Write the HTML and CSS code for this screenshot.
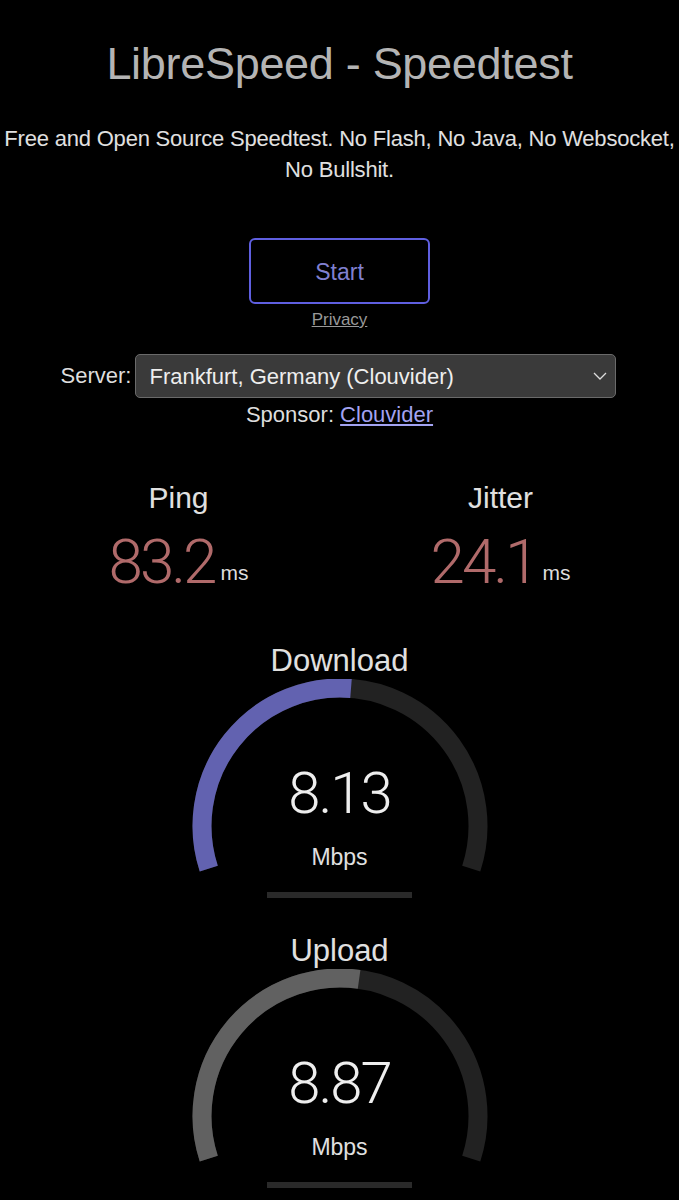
FILE: index.html
```html
<!DOCTYPE html>
<html>
    <head lang="en">
        <meta charset="UTF-8">
        <title>LibreSpeed - Speedtest</title>
        <link rel="stylesheet" href="styles.css">
    </head>
    <body>
        <h1 id="title">LibreSpeed - Speedtest</h1>
        <p id="intro">Free and Open Source Speedtest. No Flash, No Java, No Websocket, No Bullshit.</p>
        <div id="startBtn">Start</div>
        <a id="privacy" href="#">Privacy</a>
        <div id="server">
            <label for="serverList">Server:</label>
            <span class="select-wrap">
                <select id="serverList">
                    <option>Frankfurt, Germany (Clouvider)</option>
                </select>
                <svg class="chevron" width="14" height="8" viewBox="0 0 14 8"><path d="M1 1 L7 7 L13 1" fill="none" stroke="#ddd" stroke-width="1.3"/></svg>
            </span>
        </div>
        <div id="sponsor">Sponsor: <a href="#">Clouvider</a></div>

        <div id="ping-row">
            <div class="small-meter">
                <div class="label">Ping</div>
                <div class="value"><span class="num">83.2</span><span class="unit">ms</span></div>
            </div>
            <div class="small-meter">
                <div class="label">Jitter</div>
                <div class="value"><span class="num">24.1</span><span class="unit">ms</span></div>
            </div>
        </div>

        <div class="meter-block" id="dl">
            <div class="meter-title">Download</div>
            <div class="meter">
                <svg width="300" height="195" viewBox="0 0 300 195">
                    <path class="track" d="M18.76 189.64 A138 138 0 1 1 281.24 189.64"/>
                    <path class="fill" stroke="#6262b0" d="M18.76 189.64 A138 138 0 0 1 161.0 9.44"/>
                </svg>
                <div class="meter-text">
                    <div class="meter-num">8.13</div>
                    <div class="meter-unit">Mbps</div>
                </div>
            </div>
            <div class="progress"></div>
        </div>

        <div class="meter-block" id="ul">
            <div class="meter-title">Upload</div>
            <div class="meter">
                <svg width="300" height="195" viewBox="0 0 300 195">
                    <path class="track" d="M18.76 189.64 A138 138 0 1 1 281.24 189.64"/>
                    <path class="fill" stroke="#616161" d="M18.76 189.64 A138 138 0 0 1 169.1 10.33"/>
                </svg>
                <div class="meter-text">
                    <div class="meter-num">8.87</div>
                    <div class="meter-unit">Mbps</div>
                </div>
            </div>
            <div class="progress"></div>
        </div>
    </body>
</html>
```

FILE: styles.css
```css
*{
    margin:0;
    padding:0;
    box-sizing:border-box;
}
body{
    background-color:#000;
    color:#ddd;
    font-family:"Liberation Sans", Arial, sans-serif;
    text-align:center;
    overflow:hidden;
}
a{
    color:#999;
}
#title{
    font-size:45px;
    font-weight:normal;
    line-height:54px;
    color:#b4b4b4;
    padding-top:37px;
    letter-spacing:-0.3px;
}
#intro{
    margin-top:32px;
    font-size:22px;
    line-height:31px;
    color:#e0e0e0;
    letter-spacing:-0.2px;
}
#startBtn{
    width:181px;
    height:66px;
    margin:53px auto 0;
    border:2.5px solid #5f5fe0;
    border-radius:6px;
    color:#8080d0;
    font-size:23px;
    line-height:64px;
    cursor:pointer;
}
#privacy{
    display:block;
    width:60px;
    margin:5px auto 0;
    font-size:17px;
    line-height:21px;
    color:#999;
}
#server{
    display:flex;
    justify-content:center;
    align-items:center;
    gap:4px;
    margin-top:24px;
    font-size:22px;
    color:#ddd;
    padding-right:2px;
}
.select-wrap{
    position:relative;
    display:block;
}
#serverList{
    display:block;
    width:481px;
    height:44px;
    appearance:none;
    -webkit-appearance:none;
    background-color:#3a3a3a;
    border:1px solid #6a6a6a;
    border-radius:5px;
    color:#eee;
    font-family:"Liberation Sans", Arial, sans-serif;
    font-size:22px;
    padding-left:13px;
}
.chevron{
    position:absolute;
    right:9px;
    top:18px;
}
#sponsor{
    margin-top:5px;
    font-size:22px;
    line-height:24px;
    color:#ddd;
}
#sponsor a{
    color:#a3a3f2;
}
#ping-row{
    display:flex;
    width:644px;
    margin:54px auto 0;
}
.small-meter{
    flex:1;
}
.small-meter .label{
    font-size:30px;
    line-height:34px;
    color:#e0e0e0;
}
.small-meter .value{
    margin-top:16px;
    line-height:62px;
    height:62px;
}
.small-meter .num{
    font-family:Roboto, sans-serif;
    font-weight:300;
    font-size:62px;
    color:#b06a6a;
    letter-spacing:-3px;
}
.small-meter .unit{
    font-size:21px;
    line-height:20px;
    color:#ddd;
    margin-left:6px;
    position:relative;
    top:-3px;
}
.meter-block{
    margin-top:50px;
}
#ul{
    margin-top:35px;
}
.meter-title{
    font-size:31px;
    line-height:36px;
    color:#e0e0e0;
}
.meter{
    position:relative;
    width:300px;
    height:195px;
    margin:0 auto;
}
.meter svg{
    display:block;
}
.meter .track{
    fill:none;
    stroke:#222;
    stroke-width:19;
}
.meter .fill{
    fill:none;
    stroke-width:19;
}
.meter-text{
    position:absolute;
    left:0;
    top:0;
    width:100%;
}
.meter-num{
    margin-top:84px;
    font-family:Roboto, sans-serif;
    font-weight:300;
    font-size:58px;
    line-height:60px;
    color:#eee;
    letter-spacing:-2px;
}
.meter-unit{
    margin-top:22px;
    font-size:23px;
    line-height:24px;
    color:#e0e0e0;
}
.progress{
    width:145px;
    height:6px;
    margin:18px auto 0;
    background-color:#2a2a2a;
}
```
